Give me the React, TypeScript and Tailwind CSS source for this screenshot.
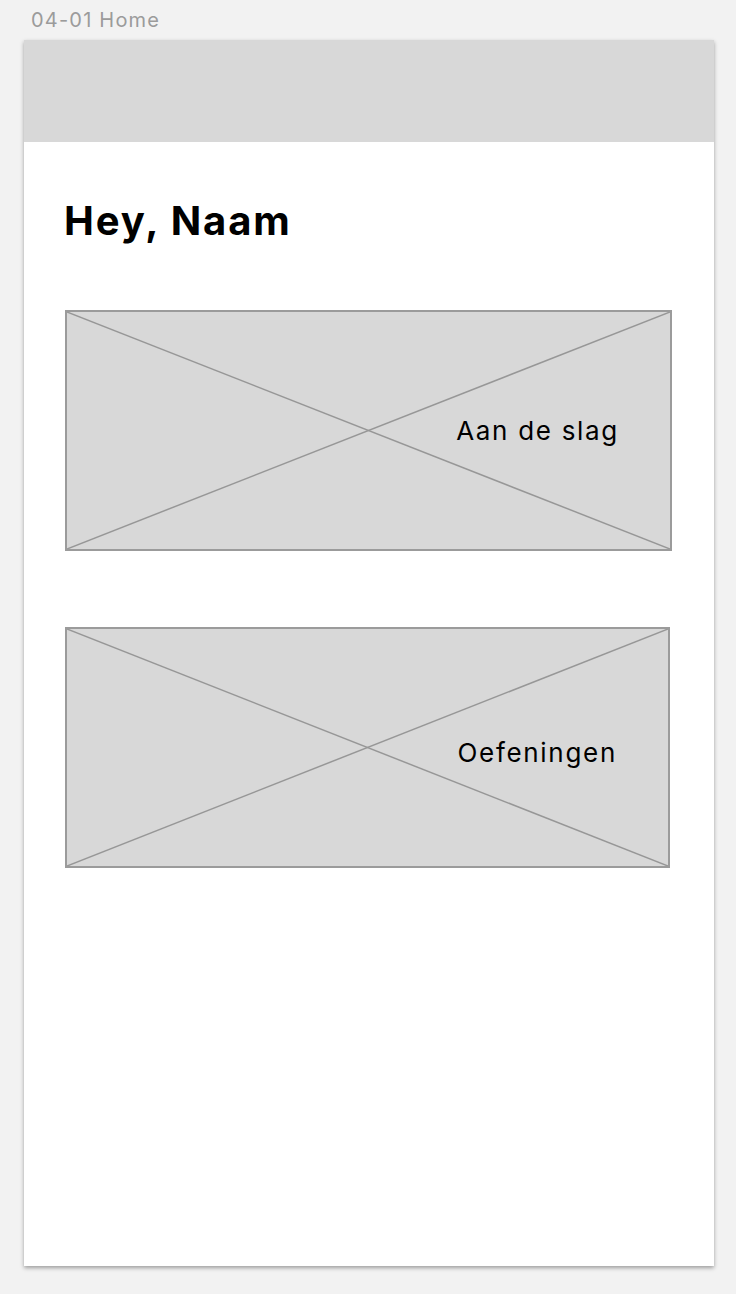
import React from "react";

function Placeholder({ label, className, labelClass }: { label: string; className: string; labelClass: string }) {
  return (
    <div className={`relative bg-[#d8d8d8] border-2 border-[#9b9b9b] ${className}`}>
      <svg className="absolute inset-0 w-full h-full" preserveAspectRatio="none" viewBox="0 0 100 100">
        <line x1="0" y1="0" x2="100" y2="100" stroke="#979797" strokeWidth="1.5" vectorEffect="non-scaling-stroke" />
        <line x1="100" y1="0" x2="0" y2="100" stroke="#979797" strokeWidth="1.5" vectorEffect="non-scaling-stroke" />
      </svg>
      <div className="relative h-full flex items-center justify-end pr-[51px]">
        <span className={`text-[26px] leading-none text-black tracking-[1.7px] ${labelClass}`}>{label}</span>
      </div>
    </div>
  );
}

export default function App() {
  return (
    <div className="w-[736px] h-[1294px] bg-[#f2f2f2] overflow-hidden font-['Inter','Liberation_Sans',sans-serif]">
      <div className="pl-[31px] pt-[8px] h-[40px] text-[20px] leading-[24px] tracking-[1.2px] text-[#9b9b9b]">04-01 Home</div>
      <div className="ml-[24px] w-[690px] h-[1226px] bg-white shadow-[0_2px_4px_rgba(0,0,0,0.35)] flex flex-col">
        <div className="h-[102px] bg-[#d8d8d8]" />
        <div className="px-[41px] pt-[56px]">
          <h1 className="ml-[-1px] text-[40px] leading-[46px] font-bold tracking-[1.9px] text-black">Hey, Naam</h1>
          <div className="mt-[66px] flex flex-col gap-[76px]">
            <Placeholder label="Aan de slag" labelClass="" className="w-[607px] h-[241px]" />
            <Placeholder label="Oefeningen" labelClass="mt-[10px]" className="w-[605px] h-[241px]" />
          </div>
        </div>
      </div>
    </div>
  );
}
